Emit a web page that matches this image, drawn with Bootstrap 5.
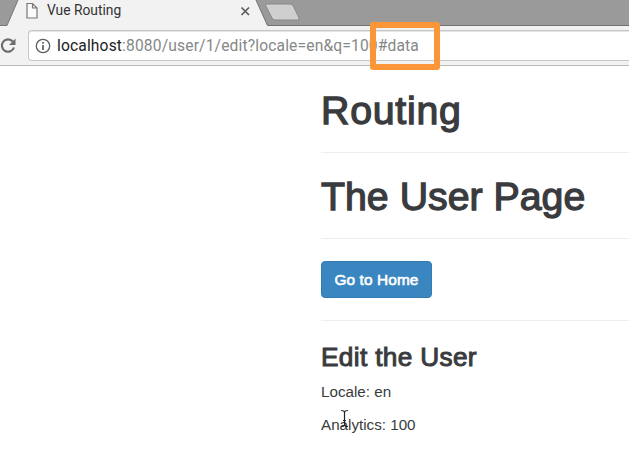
<!DOCTYPE html>
<html lang="en">
<head>
<meta charset="utf-8">
<title>Vue Routing</title>
<link href="https://cdn.jsdelivr.net/npm/bootstrap@5.3.0/dist/css/bootstrap.min.css" rel="stylesheet">
<style>
body{font-family:"Liberation Sans",Arial,sans-serif;color:#3a3b3e;font-size:15.2px;height:452px}
svg{display:block}
.chrome{height:66px;background:#f2f2f2;border-bottom:1px solid #b9b9b9;font-family:Roboto,sans-serif}
.tabstrip{height:26px}
.tab-title{left:47px;top:0;font-size:13.8px;line-height:20px;color:#333}
.toolbar{height:39px;padding-top:4px}
.reload{width:28px;padding-top:7px}
.address{height:31px;border:1px solid #c6c6c6;border-right:0;border-radius:4px 0 0 4px;padding-left:6px;font-size:15.6px;color:#858888;box-shadow:inset 0 1px #e5e5e5}
.address svg{margin-right:6px}
.url{white-space:nowrap;letter-spacing:.15px;padding-top:2px}
.host{color:#222}
.callout{left:370px;top:22px;width:70px;height:48px;border:6px solid #fb9638;border-radius:3px}
.page{margin-left:321px}
.page hr{margin:0;border-color:#eee;opacity:1}
.page h1{font-size:39.3px;font-weight:400;line-height:44px;margin:0;-webkit-text-stroke:1.3px #3a3b3e;white-space:nowrap}
.title-a{padding-top:22px;height:86px;letter-spacing:.75px}
.title-b{padding-top:21px;height:85px}
.action{padding-top:22px;height:81px}
.btn-go{background:#3a86c0;border:1px solid #347bb3;color:#fff;border-radius:4px;width:111px;height:37px;padding:0;font-size:15.4px;letter-spacing:.1px;-webkit-text-stroke:.6px #fff}
.page h3{font-size:26.2px;font-weight:400;line-height:30px;letter-spacing:.35px;margin:0;padding-top:21px;-webkit-text-stroke:1px #3a3b3e}
.page p{line-height:22px;margin:0 0 11px}
.details{padding-top:9px}
.cursor{left:339px;top:409px}
</style>
<script src="https://cdn.jsdelivr.net/npm/bootstrap@5.3.0/dist/js/bootstrap.bundle.min.js"></script>
</head>
<body class="bg-white overflow-hidden position-relative">
<header class="chrome">
  <div class="tabstrip position-relative">
    <svg width="629" height="26">
      <path d="M0 0H18L7 25.5H0Z" fill="#9a9a9a"/><path d="M18 0L7 25.5H0" fill="none" stroke="#777"/>
      <path d="M256 0L267.500 25.500H629V0Z" fill="#9a9a9a"/><path d="M256 0L267.500 25.500H629" fill="none" stroke="#707070"/>
      <path d="M267 4H290Q292.500 4 293.300 6L299 18Q299.500 20 297.500 20H275Q273 20 272 18L265.800 6Q265 4 267 4Z" fill="#cfcfcf" stroke="#888"/>
      <path d="M27 3.500H32.500L37 8V18H27ZM32.500 3.500V8H37" fill="#fafafa" stroke="#777" stroke-width="1.200"/>
      <path d="M241.500 7.500L249 15M249 7.500L241.500 15" stroke="#5c5c5c" stroke-width="1.700"/>
    </svg>
    <span class="tab-title position-absolute">Vue Routing</span>
  </div>
  <div class="toolbar d-flex">
    <div class="reload"><svg width="18" height="18"><path d="M12.800 4.500A6.200 6.200 0 1 0 14 10.500" fill="none" stroke="#6b6b6b" stroke-width="2.100"/><path d="M15.500 1.500V8H9Z" fill="#6b6b6b"/></svg></div>
    <div class="address bg-white flex-grow-1 d-flex align-items-center">
      <svg width="16" height="16"><circle cx="8" cy="8" r="6.700" fill="none" stroke="#5c5c5c" stroke-width="1.300"/><path d="M8 7V12M8 4V5.800" stroke="#5c5c5c" stroke-width="1.700"/></svg>
      <span class="url"><span class="host">localhost</span>:8080/user/1/edit?locale=en&amp;q=100#data</span>
    </div>
  </div>
</header>
<div class="callout position-absolute"></div>
<main class="page">
  <h1 class="title-a">Routing</h1><hr>
  <h1 class="title-b">The User Page</h1><hr>
  <div class="action"><button class="btn btn-go">Go to Home</button></div><hr>
  <h3>Edit the User</h3>
  <div class="details">
    <p>Locale: en</p>
    <p>Analytics: 100</p>
  </div>
</main>
<svg class="cursor position-absolute" width="11" height="19"><path d="M2 1.500Q5 1.500 5.500 3Q6 1.500 9 1.500M5.500 3V16M2 17.500Q5 17.500 5.500 16Q6 17.500 9 17.500M4 11.500H7" fill="none" stroke="#222" stroke-width="1.200"/></svg>
</body>
</html>
